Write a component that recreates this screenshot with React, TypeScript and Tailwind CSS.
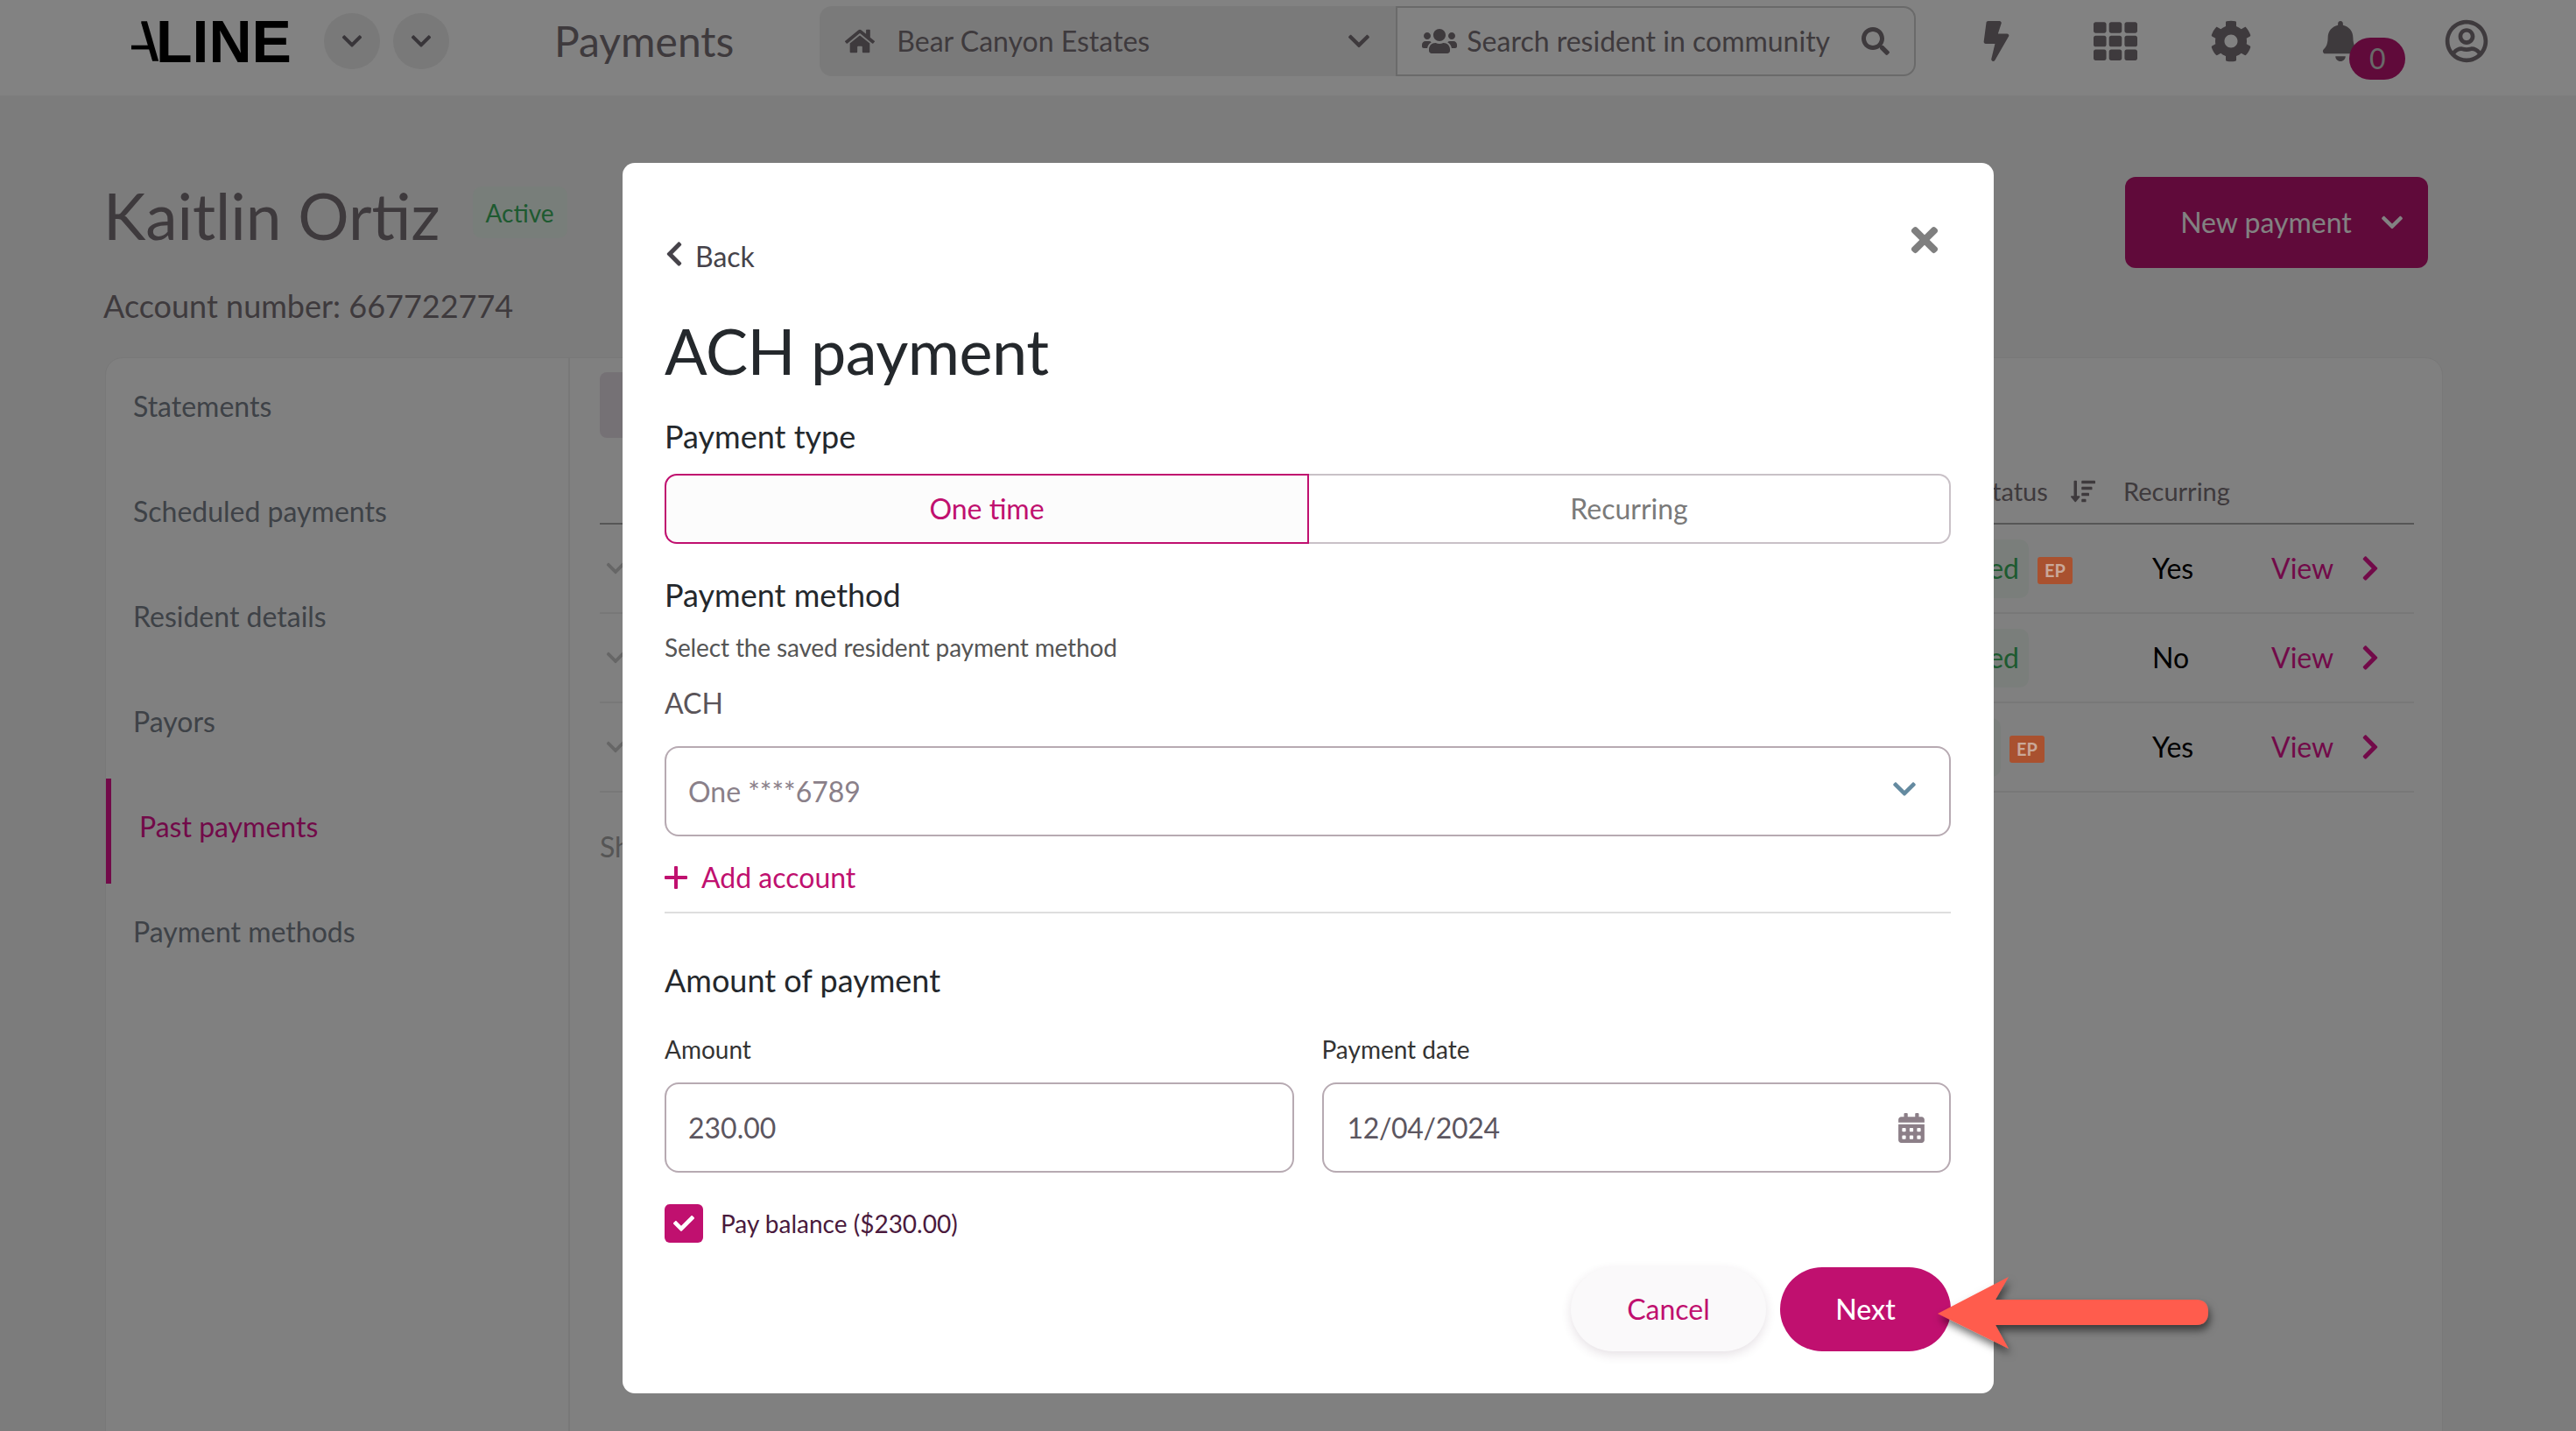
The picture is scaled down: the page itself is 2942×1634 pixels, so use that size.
import {
  FaBell,
  FaBolt,
  FaCalendarAlt,
  FaCheck,
  FaChevronDown,
  FaChevronLeft,
  FaChevronRight,
  FaCog,
  FaHome,
  FaRegUserCircle,
  FaSearch,
  FaSortAmountDown,
  FaTh,
  FaTimes,
  FaUsers,
} from 'react-icons/fa';

const navItems = ['Statements', 'Scheduled payments', 'Resident details', 'Payors', 'Past payments', 'Payment methods'];

const rows = [
  { status: 'Processed', pill: 'w-[165px]', ep: true, recurring: 'Yes' },
  { status: 'Processed', pill: 'w-[165px]', ep: false, recurring: 'No' },
  { status: 'Settled', pill: 'w-[133px]', ep: true, recurring: 'Yes' },
];

function EpBadge() {
  return (
    <span className="relative z-20 mt-[4px] ml-[10px] flex h-[31px] w-[40px] items-center justify-center rounded-[3px] bg-[#a9512f] text-[20px] font-bold text-[#c9a899]">
      EP
    </span>
  );
}

function Header() {
  return (
    <header className="flex h-[110px] items-center border-b border-[#f6f6f6] bg-white pb-[16px] pl-[150px]">
      <div className="flex w-[180px] items-center">
        <svg viewBox="0 0 36 48" className="h-[48px] w-[34px] shrink-0" fill="#000">
          <path d="M12 0h7l14 48h-7.500L12 2z" />
          <rect x="0" y="29" width="22" height="5" />
        </svg>
        <span className="-ml-[6px] font-['Liberation_Sans',sans-serif] text-[68px] leading-none font-bold text-black">LINE</span>
      </div>
      <div className="ml-[40px] flex gap-[15px]">
        {[0, 1].map((i) => (
          <div key={i} className="flex h-[64px] w-[64px] items-center justify-center rounded-full bg-[#ededed] text-[#6f6870]">
            <FaChevronDown size={26} />
          </div>
        ))}
      </div>
      <h1 className="ml-[120px] text-[48px] leading-none text-[#7b7278]">Payments</h1>
      <div className="ml-[98px] flex h-[80px] w-[1252px] text-[32px] text-[#7b7278]">
        <div className="flex w-[658px] items-center rounded-l-[14px] bg-[#f0f0f0] pr-[28px] pl-[29px]">
          <FaHome size={34} />
          <span className="ml-[25px] flex-1">Bear Canyon Estates</span>
          <FaChevronDown size={28} />
        </div>
        <div className="flex flex-1 items-center rounded-r-[14px] border-2 border-[#d0d0d0] px-[28px]">
          <FaUsers size={40} />
          <span className="ml-[11px] flex-1">Search resident in community</span>
          <FaSearch size={32} />
        </div>
      </div>
      <div className="relative ml-[69px] flex items-center text-[#7b7278]">
        <FaBolt size={46} />
        <FaTh size={50} className="ml-[88px]" />
        <FaCog size={48} className="ml-[83px]" />
        <FaBell size={46} className="ml-[78px]" />
        <span className="absolute top-[21px] left-[426px] flex h-[48px] w-[64px] items-center justify-center rounded-full bg-[#bd1572] text-[32px] text-[#cfcfcf]">
          0
        </span>
        <FaRegUserCircle size={50} className="ml-[96px]" />
      </div>
    </header>
  );
}

function Background() {
  return (
    <div className="h-[1634px]">
      <Header />
      <div className="flex items-start justify-between pt-[90px] pr-[169px] pl-[118px]">
        <div>
          <div className="flex items-start">
            <span className="text-[73px] leading-[92px] text-[#7b7278]">Kaitlin Ortiz</span>
            <span className="mt-[13px] ml-[37px] flex h-[59px] w-[108px] items-center justify-center rounded-[10px] bg-[#ecf7ef] text-[28px] text-[#3bb05e]">
              Active
            </span>
          </div>
          <p className="mt-[34px] text-[36px] leading-[46px] text-[#7b7278]">Account number: 667722774</p>
        </div>
        <button className="mt-[2px] flex h-[104px] w-[346px] items-center justify-center rounded-[12px] bg-[#bd1572] pl-[36px] text-[32px] text-white">
          New payment
          <FaChevronDown size={28} className="ml-[32px]" />
        </button>
      </div>
      <div className="mt-[36px] ml-[120px] flex h-[1300px] w-[2670px] rounded-t-[20px] border border-[#ebebeb] bg-[#fbfbfb]">
        <nav className="flex w-[530px] flex-col border-r-2 border-[#ebebeb] text-[32px] text-[#7a818b]">
          {navItems.map((item) => (
            <div
              key={item}
              className={
                item === 'Past payments'
                  ? 'flex h-[120px] items-center border-l-[6px] border-[#e01490] pb-[10px] pl-[32px] text-[#e01490]'
                  : 'flex h-[120px] items-center pb-[10px] pl-[31px]'
              }
            >
              {item}
            </div>
          ))}
        </nav>
        <div className="flex-1 pt-[16px] pr-[32px] pl-[34px]">
          <div className="h-[75px] w-[200px] rounded-[8px] bg-[#e6dde6]" />
          <div className="mt-[39px] flex h-[60px] items-center border-b-2 border-[#aaa] pb-[14px] text-[29px] text-[#7b7278]">
            <span className="ml-[1575px] flex w-[165px] items-center">
              Status
              <FaSortAmountDown size={28} className="ml-[26px]" />
            </span>
            <span>Recurring</span>
          </div>
          {rows.map((r, i) => (
            <div key={i} className="flex h-[102px] items-center border-b-2 border-[#ececec] text-[32px]">
              <FaChevronDown size={24} className="ml-[6px] text-[#c9c9c9]" />
              <div className="ml-[1437px] flex w-[306px] items-center">
                <span className={`flex h-[67px] items-center justify-end rounded-[10px] bg-[#f0f8f2] pr-[11px] text-[#3bb05e] ${r.pill}`}>
                  {r.status}
                </span>
                {r.ep && <EpBadge />}
              </div>
              <span className="w-[136px] text-black">{r.recurring}</span>
              <span className="text-[#e01490]">View</span>
              <FaChevronRight size={32} className="ml-[26px] text-[#e01490]" />
            </div>
          ))}
          <p className="mt-[38px] text-[32px] text-[#a8a8a8]">Showing</p>
        </div>
      </div>
    </div>
  );
}

function Modal() {
  return (
    <div className="absolute top-[186px] left-[711px] z-30 w-[1566px] rounded-[14px] bg-white pt-[87px] pr-[49px] pb-[48px] pl-[48px]">
      <FaTimes size={44} className="absolute top-[66px] right-[57px] text-[#7f7f7f]" />
      <div className="flex h-[40px] items-center text-[32px] text-[#46434a]">
        <FaChevronLeft size={32} className="-mt-[6px] -ml-[5px]" />
        <span className="ml-[8px]">Back</span>
      </div>
      <h2 className="mt-[42px] h-[90px] text-[72px] leading-[90px] tracking-[-0.007em] text-[#24282c]">ACH payment</h2>
      <h3 className="mt-[31px] h-[44px] text-[36px] leading-[44px] text-[#24282c]">Payment type</h3>
      <div className="mt-[21px] flex h-[80px] text-[32px]">
        <div className="flex w-[736px] items-center justify-center rounded-l-[14px] border-2 border-[#c0106f] bg-[#fcfcfc] text-[#c0106f]">One time</div>
        <div className="flex flex-1 items-center justify-center rounded-r-[14px] border-2 border-l-0 border-[#c9c1c7] text-[#7a7a7a]">Recurring</div>
      </div>
      <h3 className="mt-[36px] h-[44px] text-[36px] leading-[44px] text-[#24282c]">Payment method</h3>
      <p className="mt-[20px] h-[36px] text-[28px] leading-[36px] tracking-[-0.005em] text-[#555]">Select the saved resident payment method</p>
      <p className="mt-[26px] h-[40px] text-[32px] leading-[40px] text-[#5a5459]">ACH</p>
      <div className="mt-[29px] flex h-[103px] items-center justify-between rounded-[16px] border-2 border-[#b7aab2] pr-[36px] pl-[25px] text-[32px] text-[#8a8089]">
        One ****6789
        <FaChevronDown size={30} className="-mt-[6px] text-[#648aa0]" />
      </div>
      <div className="mt-[27px] flex h-[40px] items-center text-[32px] text-[#c0106f]">
        <svg viewBox="0 0 26 26" className="h-[26px] w-[26px]" fill="currentColor">
          <rect x="11" y="0" width="4" height="26" rx="1" />
          <rect x="0" y="11" width="26" height="4" rx="1" />
        </svg>
        <span className="ml-[16px]">Add account</span>
      </div>
      <div className="mt-[19px] h-[2px] bg-[#dedede]" />
      <h3 className="mt-[54px] h-[44px] text-[36px] leading-[44px] text-[#24282c]">Amount of payment</h3>
      <div className="mt-[39px] grid grid-cols-2 gap-[32px] text-[28px] text-[#333]">
        <div>
          <label className="block h-[36px] leading-[36px]">Amount</label>
          <div className="mt-[20px] flex h-[103px] items-center rounded-[16px] border-2 border-[#b7aab2] pl-[25px] text-[32px] text-[#5c5660]">230.00</div>
        </div>
        <div>
          <label className="block h-[36px] leading-[36px]">Payment date</label>
          <div className="mt-[20px] flex h-[103px] items-center justify-between rounded-[16px] border-2 border-[#b7aab2] pr-[26px] pl-[27px] text-[32px] text-[#5c5660]">
            <span className="tracking-[-0.01em]">12/04/2024</span>
            <FaCalendarAlt size={34} className="text-[#8c7f88]" />
          </div>
        </div>
      </div>
      <div className="mt-[36px] flex h-[44px] items-center">
        <span className="flex h-[44px] w-[44px] items-center justify-center rounded-[6px] bg-[#c0106f] text-white">
          <FaCheck size={24} />
        </span>
        <span className="ml-[20px] text-[28px] text-[#4a1a3d]">Pay balance ($230.00)</span>
      </div>
      <div className="mt-[28px] flex h-[96px] justify-end gap-[16px] text-[32px]">
        <button className="w-[223px] rounded-full bg-[#faf9fa] text-[#c0106f] shadow-[0_4px_12px_rgba(80,40,70,0.14)]">Cancel</button>
        <button className="w-[195px] rounded-full bg-[#c0106f] font-medium text-white">Next</button>
      </div>
    </div>
  );
}

function Arrow() {
  return (
    <svg viewBox="0 0 2942 1634" className="pointer-events-none absolute inset-0 z-40 h-[1634px] w-[2942px]">
      <defs>
        <filter id="arrowShadow" x="-10%" y="-30%" width="120%" height="170%">
          <feDropShadow dx="2" dy="6" stdDeviation="5" floodColor="#000" floodOpacity="0.55" />
        </filter>
      </defs>
      <path
        d="M2213 1500 L2294 1458 L2279 1484 L2508 1484 Q2522 1484 2522 1498 Q2522 1513 2508 1513 L2279 1513 L2294 1540 Z"
        fill="#ff5c4d"
        filter="url(#arrowShadow)"
      />
    </svg>
  );
}

export default function App() {
  return (
    <div className="relative h-[1634px] w-[2942px] overflow-hidden bg-[#f3f3f3] font-['Lato',sans-serif]">
      <Background />
      <div className="absolute inset-0 z-10 bg-black/[0.49]" />
      <Modal />
      <Arrow />
    </div>
  );
}
